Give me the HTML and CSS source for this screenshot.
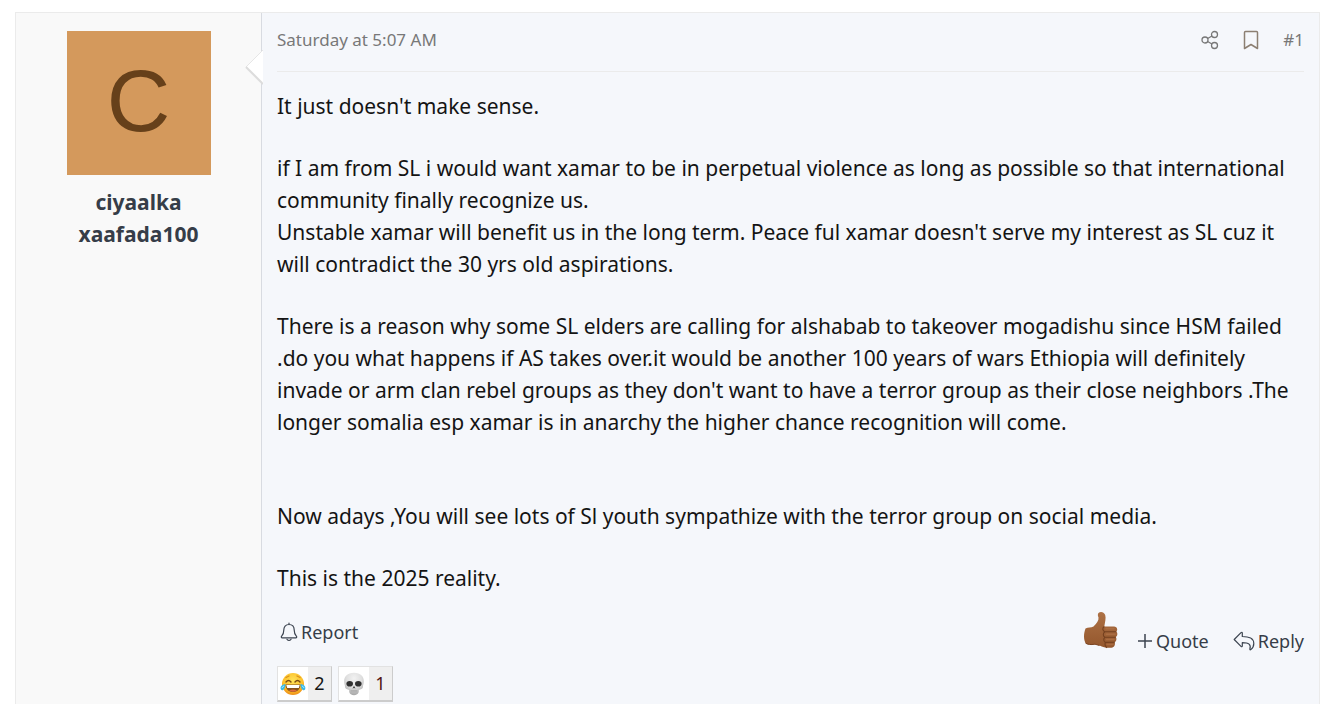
FILE: index.html
```html
<!DOCTYPE html>
<html lang="en">
<head>
<meta charset="utf-8">
<title>Thread post</title>
<link rel="stylesheet" href="styles.css">
</head>
<body>
<article class="post">
  <aside class="user">
    <a class="avatar" href="#user" aria-label="Profile">C</a>
    <h4 class="user-name"><a href="#user">ciyaalka<br>xaafada100</a></h4>
    <svg class="arrow" width="18" height="36" viewBox="0 0 18 36" aria-hidden="true">
      <path d="M18 1 1 18 18 35Z" fill="#fff"/>
      <path d="M18 1 1 18" fill="none" stroke="#e6e6e6"/>
      <path d="M1 18 18 35" fill="none" stroke="#dcdcdc" stroke-width="2"/>
    </svg>
  </aside>
  <div class="main">
    <header class="post-head">
      <a class="date" href="#post"><time>Saturday at 5:07 AM</time></a>
      <div class="head-actions">
        <a href="#share" aria-label="Share">
          <svg width="18" height="20" viewBox="0 0 18 20" fill="none" stroke="#777" stroke-width="1.3">
            <circle cx="4" cy="10" r="3"/><circle cx="13.500" cy="4.500" r="3"/><circle cx="13.500" cy="15.500" r="3"/>
            <path d="M6.600 8.500 11 6M6.600 11.500 11 14"/>
          </svg>
        </a>
        <a href="#bookmark" aria-label="Bookmark">
          <svg width="16" height="20" viewBox="0 0 16 20" fill="none" stroke="#8c7f72" stroke-width="1.5" stroke-linejoin="round">
            <path d="M1.500 2.500Q1.500 1.500 2.500 1.500H13.500Q14.500 1.500 14.500 2.500V18.500L8 14.500 1.500 18.500Z"/>
          </svg>
        </a>
        <a href="#post">#1</a>
      </div>
    </header>
    <div class="body">
      <p>It just doesn't make sense.</p>
      <p>if I am from SL i would want xamar to be in perpetual violence as long as possible so that international<br>community finally recognize us.<br>Unstable xamar will benefit us in the long term. Peace ful xamar doesn't serve my interest as SL cuz it<br>will contradict the 30 yrs old aspirations.</p>
      <p>There is a reason why some SL elders are calling for alshabab to takeover mogadishu since HSM failed<br>.do you what happens if AS takes over.it would be another 100 years of wars Ethiopia will definitely<br>invade or arm clan rebel groups as they don't want to have a terror group as their close neighbors .The<br>longer somalia esp xamar is in anarchy the higher chance recognition will come.</p>
      <p class="spaced">Now adays ,You will see lots of Sl youth sympathize with the terror group on social media.</p>
      <p>This is the 2025 reality.</p>
    </div>
    <footer class="post-foot">
      <a class="action report" href="#report">
        <svg width="18" height="20" viewBox="0 0 18 20" fill="none" stroke="#3c4450" stroke-width="1.2" stroke-linejoin="round" stroke-linecap="round">
          <path d="M9 1V2.500M9 2.500C5.500 2.500 3.800 5 3.800 8 3.800 12 2.500 13.200 1.500 14.300 1 15 1.300 15.800 2.200 15.800H15.800C16.700 15.800 17 15 16.500 14.300 15.500 13.200 14.200 12 14.200 8 14.200 5 12.500 2.500 9 2.500ZM7 17.300Q9 19.500 11 17.300"/>
        </svg>Report</a>
      <div class="foot-actions">
        <a class="like" href="#like" aria-label="Like">
          <svg width="36" height="38" viewBox="0 0 36 38">
            <defs>
              <linearGradient id="skin" x1="0" y1="0" x2="0" y2="1"><stop offset="0" stop-color="#ad7145"/><stop offset="1" stop-color="#94572d"/></linearGradient>
            </defs>
            <path d="M15.500 2C17 .2 21 .5 22.200 4 23.200 7 22 11 21.300 15.500L31 15.600C34.500 15.800 35 19.500 33.300 20.500 35 22 34.600 25 32.800 26 34 27.500 33.500 30.500 31.700 31.300 32.500 33.500 31.500 36.500 28.500 36.700 24 37 20 36.500 16.500 34.500L12 33.200C8 34 4 33.500 2.500 32 .5 28.500 .5 22.500 2.500 17.500 5 16.200 8 17 10.500 15.500 13.500 12.500 16 9.500 15.500 6.500 14.600 4.500 14.700 3 15.500 2Z" fill="url(#skin)"/>
            <path d="M21.300 15.500C19 17 19.500 20 22 20.700 19.500 22 20 25.500 22 26.200 20 27.500 20.500 30.500 22.500 31.400 21.500 33 22 35.500 24 36.700M22 20.700H33.300M22 26.200H32.800M22.500 31.400 31.700 31.300" fill="none" stroke="#74401f" stroke-width="1.100"/>
            <path d="M23 17.800H31M23.500 23.200H32M23.500 28.500H31M24 33.500H30" stroke="#b3754a" stroke-width="1.500" stroke-linecap="round" opacity=".6"/>
            <path d="M2.500 32C4 33.500 8 34 12 33.200L16.500 34.500" fill="none" stroke="#7a4320"/>
          </svg>
        </a>
        <a class="action" href="#quote">
          <svg width="16" height="18" viewBox="0 0 16 18" stroke="#3c4450" stroke-width="1.5"><path d="M1 9H15M8 2V16"/></svg>Quote</a>
        <a class="action" href="#reply">
          <svg width="22" height="20" viewBox="0 0 22 20" fill="none" stroke="#3c4450" stroke-width="1.200" stroke-linejoin="round">
            <path d="M1.200 8.500 8 1.700C8.700 1 9.300 1.200 9.300 2V5.500C16 5.500 20.800 7 20.800 12.500 20.800 15 19.800 17 17.800 18.600 17.200 19 16.700 18.700 16.900 18 18.200 13.500 16 11.700 9.300 11.700V15C9.300 15.800 8.700 16 8 15.300Z"/>
          </svg>Reply</a>
      </div>
    </footer>
    <div class="reactions">
      <button class="reaction" type="button" aria-label="Laugh, 2">
        <span class="emoji">
          <svg width="26" height="24" viewBox="0 0 26 24">
            <defs><radialGradient id="face" cx=".5" cy=".35" r=".65"><stop offset="0" stop-color="#ffe35b"/><stop offset=".7" stop-color="#fcbe28"/><stop offset="1" stop-color="#ed8d18"/></radialGradient></defs>
            <circle cx="13" cy="12" r="11" fill="url(#face)"/>
            <path d="M6 5.500 9 4M17 4 20 5.500" stroke="#d9911d" stroke-width="1.300" stroke-linecap="round"/>
            <path d="M6 10Q8.500 7 11 10M15 10Q17.500 7 20 10" fill="none" stroke="#7a4c14" stroke-width="1.400" stroke-linecap="round"/>
            <path d="M5.500 12.500H20.500C20.500 22.500 5.500 22.500 5.500 12.500Z" fill="#85511c"/>
            <path d="M6.300 13H19.700L18.800 16H7.200Z" fill="#fff"/>
            <path d="M9 18.700Q13 16.500 17 18.700 13 21 9 18.700Z" fill="#e0693e"/>
            <path d="M5.500 12C1.500 12.500 0 15 .8 17.200 2 19.500 5.300 18 5.500 12ZM20.500 12C24.500 12.500 26 15 25.200 17.200 24 19.500 20.700 18 20.500 12Z" fill="#38b9e9"/>
            <path d="M2 16Q2.500 14.500 4 14M24 16Q23.500 14.500 22 14" fill="none" stroke="#a9e5fa"/>
          </svg>
        </span>
        <span class="count">2</span>
      </button>
      <button class="reaction" type="button" aria-label="Skull, 1">
        <span class="emoji">
          <svg width="22" height="24" viewBox="0 0 22 24">
            <defs><radialGradient id="bone" cx=".5" cy=".25" r=".75"><stop offset="0" stop-color="#f2f2f2"/><stop offset=".55" stop-color="#dedede"/><stop offset="1" stop-color="#a6a6a6"/></radialGradient></defs>
            <path d="M11 .8C17.500 .8 21 4.500 20.800 9.500 20.800 12 19.800 13.500 20 15 19.800 17 17.500 17.500 15.800 18 16 20 15.500 23 11 23.200 6.500 23 6 20 6.200 18 4.500 17.500 2.200 17 2 15 2.200 13.500 1.200 12 1.200 9.500 1 4.500 4.500 .8 11 .8Z" fill="url(#bone)"/>
            <ellipse cx="6.700" cy="11.800" rx="3.300" ry="2.800" fill="#303030"/>
            <ellipse cx="15.300" cy="11.800" rx="3.300" ry="2.800" fill="#303030"/>
            <path d="M11 13.800 12.500 16.500 11 16 9.500 16.500Z" fill="#424242"/>
            <path d="M7.500 18.800H14.500M9 18V20.500M11 18V20.500M13 18V20.500" stroke="#aaa" stroke-width=".8"/>
          </svg>
        </span>
        <span class="count voted">1</span>
      </button>
    </div>
  </div>
</article>
</body>
</html>
```
FILE: styles.css
```css
* { box-sizing: border-box; }
body {
  margin: 0;
  padding: 12px 6px 0 15px;
  background: #fff;
  color: #141414;
  font-family: "Segoe UI", "Noto Sans", "Open Sans", sans-serif;
  font-size: 21px;
  line-height: 32px;
}
a { color: inherit; text-decoration: none; }
svg { display: block; flex: none; }
.post {
  display: grid;
  grid-template-columns: 246px minmax(0, 1fr);
  min-height: calc(100vh - 12px);
  border: 1px solid #ebebeb;
  border-bottom: 0;
  background: #f5f7fb;
}
.user {
  position: relative;
  display: flex;
  flex-direction: column;
  align-items: center;
  gap: 11px;
  padding: 18px 0;
  border-right: 1px solid #d8dbe1;
  background: #f9f9f9;
}
.avatar {
  width: 144px;
  height: 144px;
  background: #d4995c;
  color: #66401a;
  font-family: "Liberation Sans", Arial, sans-serif;
  font-size: 88px;
  line-height: 140px;
  text-align: center;
}
.user-name {
  margin: 0;
  color: #363d48;
  font-weight: 700;
  text-align: center;
}
.arrow { position: absolute; top: 36px; right: -2px; }
.main { padding: 11px 15px 0; }
.post-head {
  display: flex;
  justify-content: space-between;
  align-items: center;
  padding-bottom: 15px;
  border-bottom: 1px solid #ebebeb;
  color: #787878;
  font-size: 17px;
}
.head-actions { display: flex; align-items: center; gap: 24px; }
.body { padding-top: 18px; }
.body p { margin: 0 0 30px; }
.body p.spaced { margin-top: 62px; }
.body p:last-child { margin-bottom: 0; }
.post-foot {
  display: flex;
  justify-content: space-between;
  margin-top: 17px;
  color: #363d48;
  font-size: 18px;
}
.action { display: flex; align-items: center; gap: 3px; }
.report { align-self: flex-start; padding: 5px 0 0 3px; }
.foot-actions { display: flex; align-items: flex-end; gap: 24px; }
.like { align-self: flex-start; margin-right: -6px; }
.foot-actions .action { padding-top: 14px; }
.reactions { display: flex; gap: 6px; margin-top: 9px; }
.reaction {
  display: flex;
  height: 36px;
  padding: 0;
  border: 1px solid #e2e2e2;
  border-right: 1px solid #ccc;
  border-bottom: 2px solid #ccc;
  background: #efefef;
  color: #141414;
  font: inherit;
  font-size: 18px;
}
.emoji {
  display: grid;
  place-items: center;
  width: 30px;
  height: 100%;
  background: #fff;
}
.count { width: 23px; line-height: 33px; text-align: center; }
.voted { color: #521414; }
```
